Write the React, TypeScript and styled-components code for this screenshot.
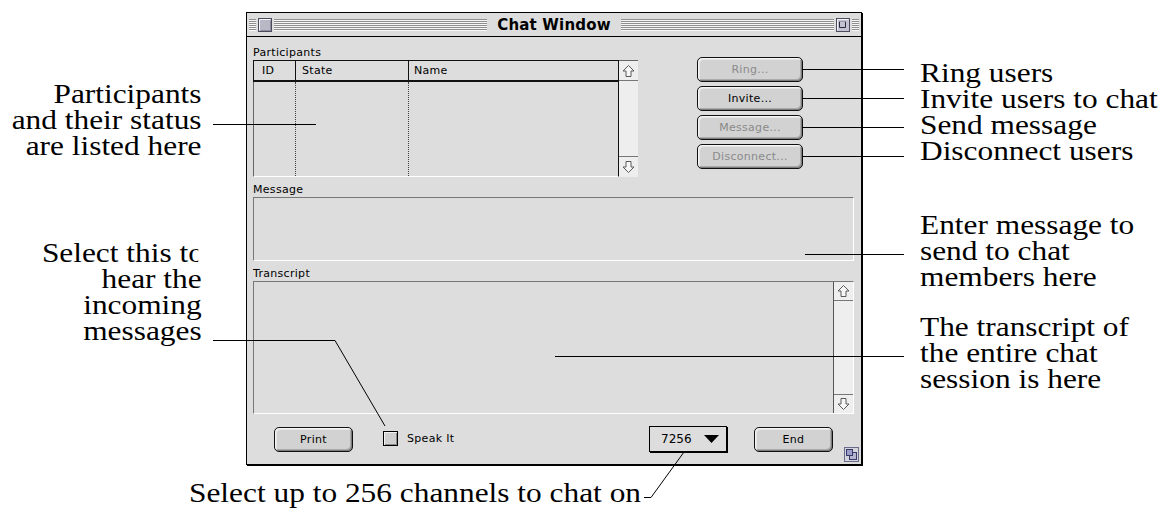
import React from "react";
import styled, { createGlobalStyle } from "styled-components";

const GlobalStyle = createGlobalStyle`
  html, body {
    margin: 0;
    padding: 0;
    background: #fff;
  }
  body {
    width: 1170px;
    height: 529px;
    overflow: hidden;
  }
`;

const ui = `"DejaVu Sans", Verdana, sans-serif`;
const serif = `"Liberation Serif", "Times New Roman", serif`;

const Page = styled.div`
  position: relative;
  width: 1170px;
  height: 529px;
  overflow: hidden;
  display: grid;
  grid-template-columns: 246px 617px 1fr;
  grid-template-rows: 465px 1fr;
  font-family: ${serif};
  color: #000;
`;

const NoteColumn = styled.div<{ $side: "left" | "right" }>`
  display: flex;
  flex-direction: column;
  align-items: ${(p) => (p.$side === "left" ? "flex-end" : "flex-start")};
  padding-right: ${(p) => (p.$side === "left" ? "44px" : "0")};
  padding-left: ${(p) => (p.$side === "right" ? "57px" : "0")};
`;

const Note = styled.div<{ $side: "left" | "right"; $top: number }>`
  margin-top: ${(p) => p.$top}px;
  font-size: 28px;
  line-height: 26px;
  white-space: nowrap;
  text-align: ${(p) => (p.$side === "left" ? "right" : "left")};
  transform: scaleX(1.12);
  transform-origin: ${(p) => (p.$side === "left" ? "right" : "left")} top;
`;

const NoteLine = styled.div<{ $clip?: boolean }>`
  ${(p) => (p.$clip ? "margin-right: -2px; clip-path: inset(0 5px 0 0);" : "")}
`;

const Caption = styled.div`
  grid-column: 1 / -1;
  padding: 15px 0 0 189px;
`;

const CaptionText = styled.span`
  display: inline-block;
  font-size: 28px;
  line-height: 26px;
  white-space: nowrap;
  transform: scaleX(1.12);
  transform-origin: left top;
`;

const LeaderLayer = styled.svg`
  position: absolute;
  left: 0;
  top: 0;
  pointer-events: none;
`;

/* ---------- window ---------- */

const Window = styled.div`
  grid-column: 2;
  margin-top: 12px;
  width: 616px;
  height: 453px;
  box-sizing: border-box;
  border: 1px solid #000;
  box-shadow: 1px 1px 0 #000;
  background: #dddddd;
  display: flex;
  flex-direction: column;
  font-family: ${ui};
  font-size: 11px;
  color: #000;
`;

const TitleBar = styled.div`
  height: 24px;
  box-sizing: border-box;
  border-bottom: 1px solid #000;
  padding: 0 2px;
  display: flex;
  align-items: center;
  gap: 2px;
`;

const Stripes = styled.div<{ $w?: number }>`
  height: 12px;
  ${(p) => (p.$w ? `width: ${p.$w}px;` : "flex: 1;")}
  background: repeating-linear-gradient(
    to bottom,
    #8e8e8e 0 1px,
    #f7f7f7 1px 2px
  );
`;

const Title = styled.div`
  padding: 0 8px;
  font-weight: bold;
  font-size: 15px;
  letter-spacing: 0.2px;
`;

const Body = styled.div`
  padding: 9px 7px 0 6px;
  display: flex;
  flex-direction: column;
`;

const TopSection = styled.div`
  display: flex;
  align-items: flex-start;
`;

const Label = styled.div<{ $gap?: number }>`
  height: 13px;
  line-height: 13px;
  margin-top: ${(p) => p.$gap ?? 0}px;
  margin-bottom: 1px;
  letter-spacing: 0.3px;
`;

const ParticipantsPanel = styled.div`
  width: 385px;
`;

const ListFrame = styled.div`
  height: 117px;
  display: grid;
  grid-template-columns: 366px 19px;
`;

const ListMain = styled.div`
  display: flex;
  flex-direction: column;
`;

const Header = styled.div`
  height: 22px;
  box-sizing: border-box;
  border: 1px solid #111;
  border-bottom-width: 2px;
  display: grid;
  grid-template-columns: 42px 113px 1fr;
`;

const HeadCell = styled.div<{ $pad: number; $last?: boolean }>`
  padding-left: ${(p) => p.$pad}px;
  line-height: 19px;
  border-right: ${(p) => (p.$last ? "none" : "1px solid #111")};
  letter-spacing: 0.3px;
`;

const ListBody = styled.div`
  flex: 1;
  border-left: 1px solid #666;
  border-right: 1px solid #111;
  border-bottom: 1px solid #fff;
  display: grid;
  grid-template-columns: 42px 113px 1fr;
`;

const BodyCol = styled.div<{ $last?: boolean }>`
  border-right: ${(p) => (p.$last ? "none" : "1px dotted #444")};
`;

const ScrollTrack = styled.div<{ $w: number; $topLine?: boolean }>`
  width: ${(p) => p.$w}px;
  background: #eeeeee;
  display: flex;
  flex-direction: column;
  justify-content: space-between;
  box-sizing: border-box;
  ${(p) => (p.$topLine ? "border-top: 1px solid #666;" : "")}
`;

const ArrowBox = styled.div<{ $h: number; $down?: boolean }>`
  height: ${(p) => p.$h}px;
  box-sizing: border-box;
  ${(p) => (p.$down ? "border-top: 1px solid #777;" : "border-bottom: 1px solid #777;")}
  display: flex;
  align-items: center;
  justify-content: center;
`;

const ButtonColumn = styled.div`
  margin: 11px 0 0 59px;
  display: flex;
  flex-direction: column;
  gap: 4px;
`;

const MacButton = styled.div<{ $w: number; $dim?: boolean }>`
  width: ${(p) => p.$w}px;
  height: 25px;
  box-sizing: border-box;
  border: 1px solid #111;
  border-radius: 5px;
  background: #d2d2d2;
  box-shadow: inset 1px 1px 0 #f5f5f5, inset -1px -1px 0 #7c7c7c,
    inset 2px 2px 0 #e4e4e4, inset -2px -2px 0 #aaaaaa;
  display: flex;
  align-items: center;
  justify-content: center;
  color: ${(p) => (p.$dim ? "#8a8a8a" : "#000")};
  letter-spacing: 0.3px;
`;

const Field = styled.div<{ $h: number }>`
  height: ${(p) => p.$h}px;
  box-sizing: border-box;
  border-top: 1px solid #777;
  border-left: 1px solid #777;
  border-bottom: 1px solid #fff;
  border-right: 1px solid #fff;
  display: flex;
  justify-content: flex-end;
`;

const FieldScroll = styled(ScrollTrack)`
  border-left: 1px solid #555;
`;

const Footer = styled.div`
  flex: 1;
  display: flex;
  align-items: flex-start;
  padding: 13px 2px 0 27px;
`;

const CheckBox = styled.div`
  width: 15px;
  height: 15px;
  box-sizing: border-box;
  margin: 4px 0 0 30px;
  border: 1px solid #000;
  background: #cfcfcf;
  box-shadow: inset 1px 1px 0 #f2f2f2, inset -1px -1px 0 #8a8a8a;
`;

const CheckLabel = styled.div`
  margin: 5px 0 0 9px;
  letter-spacing: 0.3px;
`;

const PopUp = styled.div`
  margin: -1px 0 0 auto;
  width: 78px;
  height: 26px;
  box-sizing: border-box;
  border: 1px solid #000;
  box-shadow: 1px 1px 0 #000;
  background: #dddddd;
  display: flex;
  align-items: center;
  justify-content: space-between;
  padding: 0 7px 0 11px;
  font-size: 12px;
`;

const EndSlot = styled.div`
  margin-left: 27px;
`;

const GrowBox = styled.svg`
  margin: 20px 0 0 11px;
  flex-shrink: 0;
`;

/* ---------- drawings ---------- */

const CloseBox = () => (
  <svg width="14" height="14" viewBox="0 0 14 14">
    <rect x="0.5" y="0.5" width="13" height="13" fill="#b9b9c6" stroke="#4c4c5c" />
    <path d="M1.5 12.5V1.5H12.5" stroke="#f4f4ff" fill="none" />
    <path d="M2.5 12.5H12.5V2.5" stroke="#8a8a9e" fill="none" />
  </svg>
);

const ZoomBox = () => (
  <svg width="14" height="14" viewBox="0 0 14 14">
    <rect x="0.5" y="0.5" width="13" height="13" fill="#c2c2d0" stroke="#4c4c5c" />
    <path d="M1.5 12.5V1.5H12.5" stroke="#f4f4ff" fill="none" />
    <path d="M3.5 3.5V9.5H9.5V3.5" stroke="#2a2a3a" fill="none" />
    <path d="M3.5 3.5H9.5" stroke="#9a9ab0" fill="none" />
  </svg>
);

const Arrow = ({ down }: { down?: boolean }) => (
  <svg width="15" height="14" viewBox="0 0 15 14">
    <path
      d={
        down
          ? "M7.5 12.5L13 7H10V1.5H5V7H2Z"
          : "M7.5 1.5L13 7H10V12.5H5V7H2Z"
      }
      fill="#f6f6f6"
      stroke="#5a5a5a"
      strokeLinejoin="miter"
    />
  </svg>
);

const Triangle = () => (
  <svg width="15" height="8" viewBox="0 0 15 8">
    <path d="M0 0H15L7.5 8Z" fill="#000" />
  </svg>
);

const Leaders = () => (
  <LeaderLayer width={1170} height={529} viewBox="0 0 1170 529">
    <g stroke="#000" strokeWidth={1} fill="none">
      <path d="M213 124.5H316" />
      <path d="M802 69.5H904" />
      <path d="M802 98.5H904" />
      <path d="M802 127.5H904" />
      <path d="M802 156.5H904" />
      <path d="M805 254.5H904" />
      <path d="M555 356.5H904" />
      <path d="M213 340.5H335L385 426" />
      <path d="M644 497.5H651L684 452" />
    </g>
  </LeaderLayer>
);

const leftNotes = [
  { top: 81, lines: ["Participants", "and their status", "are listed here"] },
  { top: 81, lines: ["Select this to", "hear the", "incoming", "messages"] },
];

const rightNotes = [
  { top: 60, lines: ["Ring users", "Invite users to chat", "Send message", "Disconnect users"] },
  { top: 48, lines: ["Enter message to", "send to chat", "members here"] },
  { top: 24, lines: ["The transcript of", "the entire chat", "session is here"] },
];

const sideButtons = [
  { label: "Ring...", dim: true },
  { label: "Invite...", dim: false },
  { label: "Message...", dim: true },
  { label: "Disconnect...", dim: true },
];

export default function App() {
  return (
    <>
      <GlobalStyle />
      <Page>
        <NoteColumn $side="left">
          {leftNotes.map((n, i) => (
            <Note key={i} $side="left" $top={n.top}>
              {n.lines.map((l, j) => (
                <NoteLine key={j} $clip={i === 1 && j === 0}>
                  {l}
                </NoteLine>
              ))}
            </Note>
          ))}
        </NoteColumn>

        <Window>
          <TitleBar>
            <Stripes $w={7} />
            <CloseBox />
            <Stripes />
            <Title>Chat Window</Title>
            <Stripes />
            <ZoomBox />
            <Stripes $w={7} />
          </TitleBar>

          <Body>
            <TopSection>
              <ParticipantsPanel>
                <Label>Participants</Label>
                <ListFrame>
                  <ListMain>
                    <Header>
                      <HeadCell $pad={8}>ID</HeadCell>
                      <HeadCell $pad={6}>State</HeadCell>
                      <HeadCell $pad={5} $last>
                        Name
                      </HeadCell>
                    </Header>
                    <ListBody>
                      <BodyCol />
                      <BodyCol />
                      <BodyCol $last />
                    </ListBody>
                  </ListMain>
                  <ScrollTrack $w={19} $topLine>
                    <ArrowBox $h={20}>
                      <Arrow />
                    </ArrowBox>
                    <ArrowBox $h={21} $down>
                      <Arrow down />
                    </ArrowBox>
                  </ScrollTrack>
                </ListFrame>
              </ParticipantsPanel>

              <ButtonColumn>
                {sideButtons.map((b) => (
                  <MacButton key={b.label} $w={106} $dim={b.dim}>
                    {b.label}
                  </MacButton>
                ))}
              </ButtonColumn>
            </TopSection>

            <Label $gap={6}>Message</Label>
            <Field $h={64} />

            <Label $gap={6}>Transcript</Label>
            <Field $h={133}>
              <FieldScroll $w={20}>
                <ArrowBox $h={19}>
                  <Arrow />
                </ArrowBox>
                <ArrowBox $h={19} $down>
                  <Arrow down />
                </ArrowBox>
              </FieldScroll>
            </Field>
          </Body>

          <Footer>
            <MacButton $w={79}>Print</MacButton>
            <CheckBox />
            <CheckLabel>Speak It</CheckLabel>
            <PopUp>
              <span>7256</span>
              <Triangle />
            </PopUp>
            <EndSlot>
              <MacButton $w={79}>End</MacButton>
            </EndSlot>
            <GrowBox width="15" height="15" viewBox="0 0 15 15">
              <rect x="0.5" y="0.5" width="14" height="14" fill="#d4d4dc" stroke="#6a6a8a" />
              <rect x="5.5" y="5.5" width="7" height="7" fill="#b4b4d0" stroke="#3a3a6a" />
              <rect x="2.5" y="2.5" width="6" height="6" fill="#9c9cc8" stroke="#3a3a6a" />
            </GrowBox>
          </Footer>
        </Window>

        <NoteColumn $side="right">
          {rightNotes.map((n, i) => (
            <Note key={i} $side="right" $top={n.top}>
              {n.lines.map((l, j) => (
                <NoteLine key={j}>{l}</NoteLine>
              ))}
            </Note>
          ))}
        </NoteColumn>

        <Caption>
          <CaptionText>Select up to 256 channels to chat on</CaptionText>
        </Caption>

        <Leaders />
      </Page>
    </>
  );
}
